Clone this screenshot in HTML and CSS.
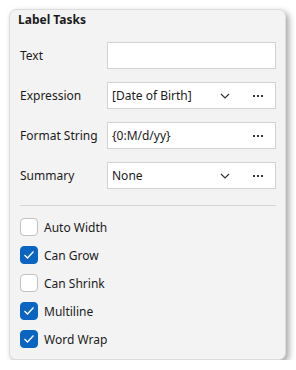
FILE: index.html
```html
<!DOCTYPE html>
<html lang="en">
<head>
  <meta charset="UTF-8" />
  <title>Label Tasks</title>
  <link rel="stylesheet" href="styles.css">
</head>
<body>
  <div class="panel">
    <div class="title">Label Tasks</div>

    <div class="fields">
      <div class="row">
        <span class="label">Text</span>
        <div class="box"></div>
      </div>
      <div class="row">
        <span class="label">Expression</span>
        <div class="box">
          <span class="value">[Date of Birth]</span>
          <svg class="chev" width="10" height="6" viewBox="0 0 10 6"><path d="M1 1 L5 5 L9 1" fill="none" stroke="#333" stroke-width="1.2"/></svg>
          <span class="dots"><i></i><i></i><i></i></span>
        </div>
      </div>
      <div class="row">
        <span class="label">Format String</span>
        <div class="box">
          <span class="value">{0:M/d/yy}</span>
          <span class="dots"><i></i><i></i><i></i></span>
        </div>
      </div>
      <div class="row">
        <span class="label">Summary</span>
        <div class="box">
          <span class="value">None</span>
          <svg class="chev" width="10" height="6" viewBox="0 0 10 6"><path d="M1 1 L5 5 L9 1" fill="none" stroke="#333" stroke-width="1.2"/></svg>
          <span class="dots"><i></i><i></i><i></i></span>
        </div>
      </div>
    </div>

    <div class="divider"></div>

    <div class="checks">
      <label class="check"><span class="cb"></span>Auto Width</label>
      <label class="check"><span class="cb on"><svg width="12" height="10" viewBox="0 0 12 10"><path d="M1.5 5 L4.5 8 L10.5 1.5" fill="none" stroke="#fff" stroke-width="1.3"/></svg></span>Can Grow</label>
      <label class="check"><span class="cb"></span>Can Shrink</label>
      <label class="check"><span class="cb on"><svg width="12" height="10" viewBox="0 0 12 10"><path d="M1.5 5 L4.5 8 L10.5 1.5" fill="none" stroke="#fff" stroke-width="1.3"/></svg></span>Multiline</label>
      <label class="check"><span class="cb on"><svg width="12" height="10" viewBox="0 0 12 10"><path d="M1.5 5 L4.5 8 L10.5 1.5" fill="none" stroke="#fff" stroke-width="1.3"/></svg></span>Word Wrap</label>
    </div>
  </div>
</body>
</html>
```

FILE: styles.css
```css
body { margin: 0; background: #fff; font-family: "Noto Sans", "Liberation Sans", sans-serif; font-size: 12px; color: #1b1b1b; }
.panel { margin: 9px 0 0 9px; width: 277px; height: 351px; box-sizing: border-box; background: #f3f3f3; border: 1px solid #dcdcdc; border-radius: 7px; box-shadow: 3px 3px 6px rgba(0,0,0,0.35); padding: 0 9px 0 10px; }
.title { font-weight: bold; line-height: 16px; margin: 2px 0 0 -2px; }
.fields { display: flex; flex-direction: column; gap: 13px; margin-top: 14px; }
.row { display: flex; align-items: center; height: 27px; }
.label { width: 87px; flex: none; }
.box { flex: 1; height: 27px; box-sizing: border-box; background: #fff; border: 1px solid #d2d2d2; display: flex; align-items: center; padding-left: 4px; }
.value { flex: 1; }
.chev { margin-right: 23px; }
.dots { display: flex; gap: 2px; width: 10px; margin-right: 12px; }
.dots i { width: 2px; height: 2px; background: #333; }
.divider { height: 1px; background: #d6d6d6; margin-top: 16px; }
.checks { display: flex; flex-direction: column; gap: 10px; margin-top: 12px; }
.check { display: flex; align-items: center; height: 18px; gap: 6px; }
.cb { width: 18px; height: 18px; box-sizing: border-box; border: 1px solid #c2c2c2; background: #fff; border-radius: 4px; display: flex; align-items: center; justify-content: center; }
.cb.on { background: #0a64c0; border-color: #0a64c0; }
```
